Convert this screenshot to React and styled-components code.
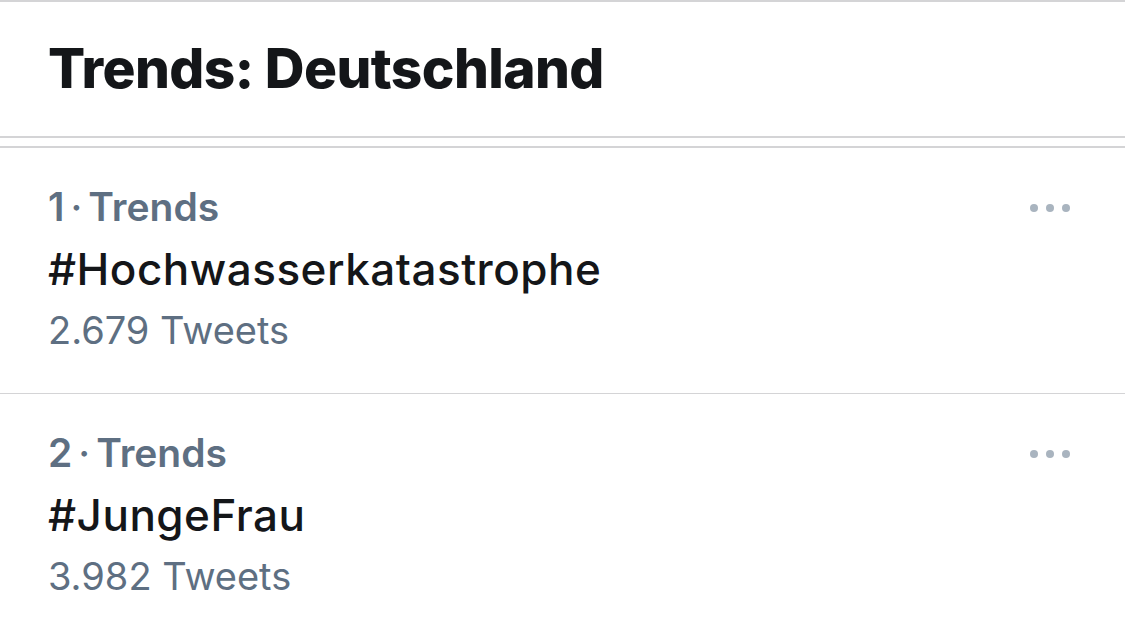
import React from "react";
import styled, { createGlobalStyle } from "styled-components";

const Global = createGlobalStyle`
  html, body { margin: 0; padding: 0; background: #fff; }
  body { font-family: Inter, "Noto Sans", sans-serif; -webkit-font-smoothing: antialiased; }
`;

const Page = styled.div`
  width: 1125px;
  height: 637px;
  overflow: hidden;
  background: #fff;
  border-top: 2px solid #d4d4d6;
  box-sizing: border-box;
`;

const Header = styled.header`
  height: 136px;
  display: flex;
  align-items: center;
  padding-left: 48px;
  border-bottom: 2px solid #d4d4d6;
  box-sizing: border-box;
`;

const Title = styled.h1`
  margin: 0;
  font-size: 55px;
  font-weight: 800;
  color: #141619;
  letter-spacing: -0.6px;
  line-height: 1;
  transform: translateY(-1px);
`;

const Spacer = styled.div`
  height: 8px;
  border-bottom: 2px solid #d4d4d6;
`;

const Row = styled.div`
  height: 246px;
  box-sizing: border-box;
  padding: 28px 48px 0 48px;
  display: flex;
  justify-content: space-between;
  border-bottom: ${(p) => (p.$last ? "none" : "1px solid #d4d4d6")};
`;

const Texts = styled.div`
  display: flex;
  flex-direction: column;
`;

const Meta = styled.div`
  font-size: 39px;
  font-weight: 600;
  color: #5e6f82;
  line-height: 62px;
`;

const Dot = styled.span`
  margin: 0 6px;
  font-weight: 500;
`;

const Tag = styled.div`
  font-size: 44px;
  font-weight: 500;
  color: #141619;
  line-height: 62px;
  letter-spacing: 0.5px;
`;

const Count = styled.div`
  font-size: 38px;
  font-weight: 400;
  color: #5e6f82;
  line-height: 60px;
`;

const More = styled.div`
  display: flex;
  gap: 8px;
  margin-top: 28px;
  margin-right: 7px;
  height: 8px;
`;

const MoreDot = styled.span`
  width: 8px;
  height: 8px;
  border-radius: 50%;
  background: #a9b4bf;
`;

const trends = [
  { rank: 1, tag: "#Hochwasserkatastrophe", count: "2.679" },
  { rank: 2, tag: "#JungeFrau", count: "3.982" },
];

export default function App() {
  return (
    <>
      <Global />
      <Page>
        <Header>
          <Title>Trends: Deutschland</Title>
        </Header>
        <Spacer />
        {trends.map((t, i) => (
          <Row key={t.rank} $last={i === trends.length - 1}>
            <Texts>
              <Meta>
                {t.rank}
                <Dot>·</Dot>Trends
              </Meta>
              <Tag>{t.tag}</Tag>
              <Count>{t.count} Tweets</Count>
            </Texts>
            <More>
              <MoreDot />
              <MoreDot />
              <MoreDot />
            </More>
          </Row>
        ))}
      </Page>
    </>
  );
}
